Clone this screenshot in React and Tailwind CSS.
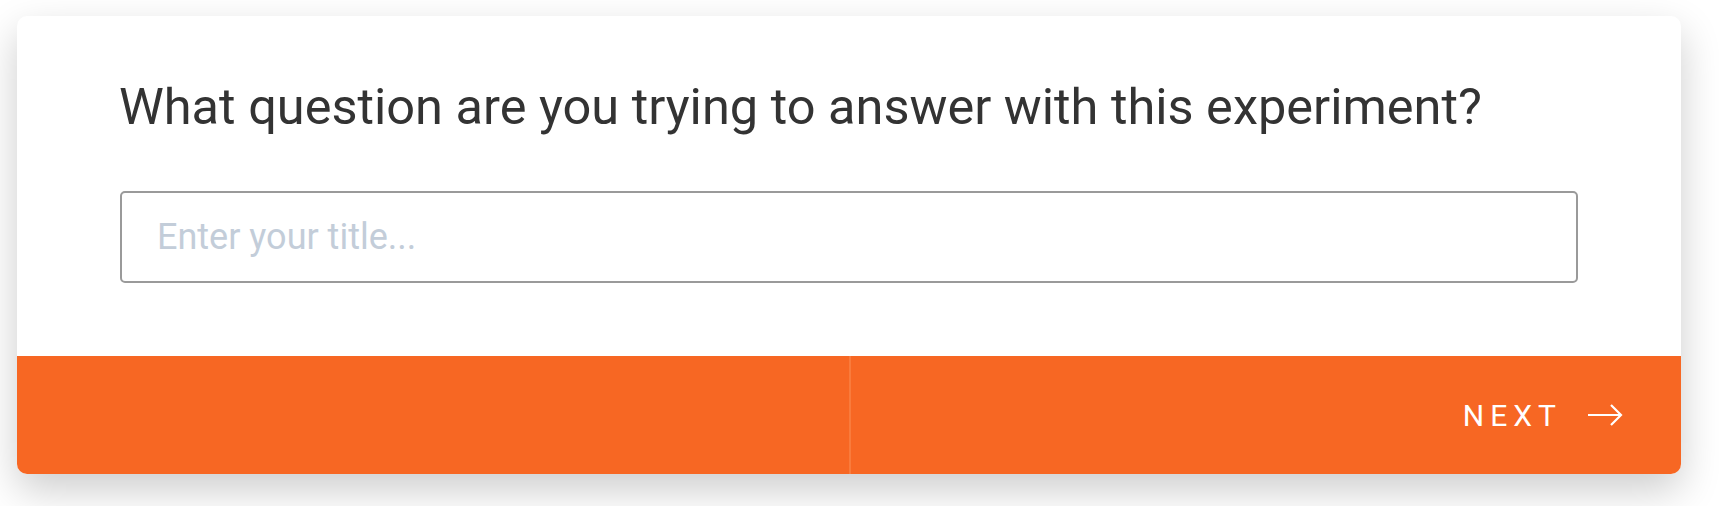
import React from "react";

function ArrowRight() {
  return (
    <svg width="36" height="22" viewBox="0 0 36 22" fill="none" className="ml-[25px]">
      <path d="M1 11h33M24 1l10 10-10 10" stroke="white" strokeWidth="2.2" />
    </svg>
  );
}

function App() {
  return (
    <div className="min-h-screen bg-white pt-[16px] pl-[17px]" style={{ fontFamily: "Roboto, 'Liberation Sans', sans-serif" }}>
      <div className="w-[1664px] rounded-[10px] bg-white overflow-hidden shadow-[0_16px_40px_rgba(0,0,0,0.2)]">
        <div className="px-[103px] pt-[62px] pb-[73px]">
          <h1 className="-ml-[1px] text-[50.5px] leading-[58px] text-[#333333] font-normal">
            What question are you trying to answer with this experiment?
          </h1>
          <input
            type="text"
            placeholder="Enter your title..."
            className="mt-[55px] block w-full h-[92px] rounded-[5px] border-2 border-[#9a9a9a] px-[35px] text-[36px] text-[#333] placeholder:text-[#c3cdd9] outline-none"
          />
        </div>
        <div className="grid grid-cols-2 h-[118px] bg-[#f76723]">
          <div></div>
          <div className="flex items-center justify-end pr-[58px] border-l-2 border-[#f97b3c]">
            <span className="text-[30px] tracking-[0.2em] text-white">NEXT</span>
            <ArrowRight />
          </div>
        </div>
      </div>
    </div>
  );
}

export default App;
